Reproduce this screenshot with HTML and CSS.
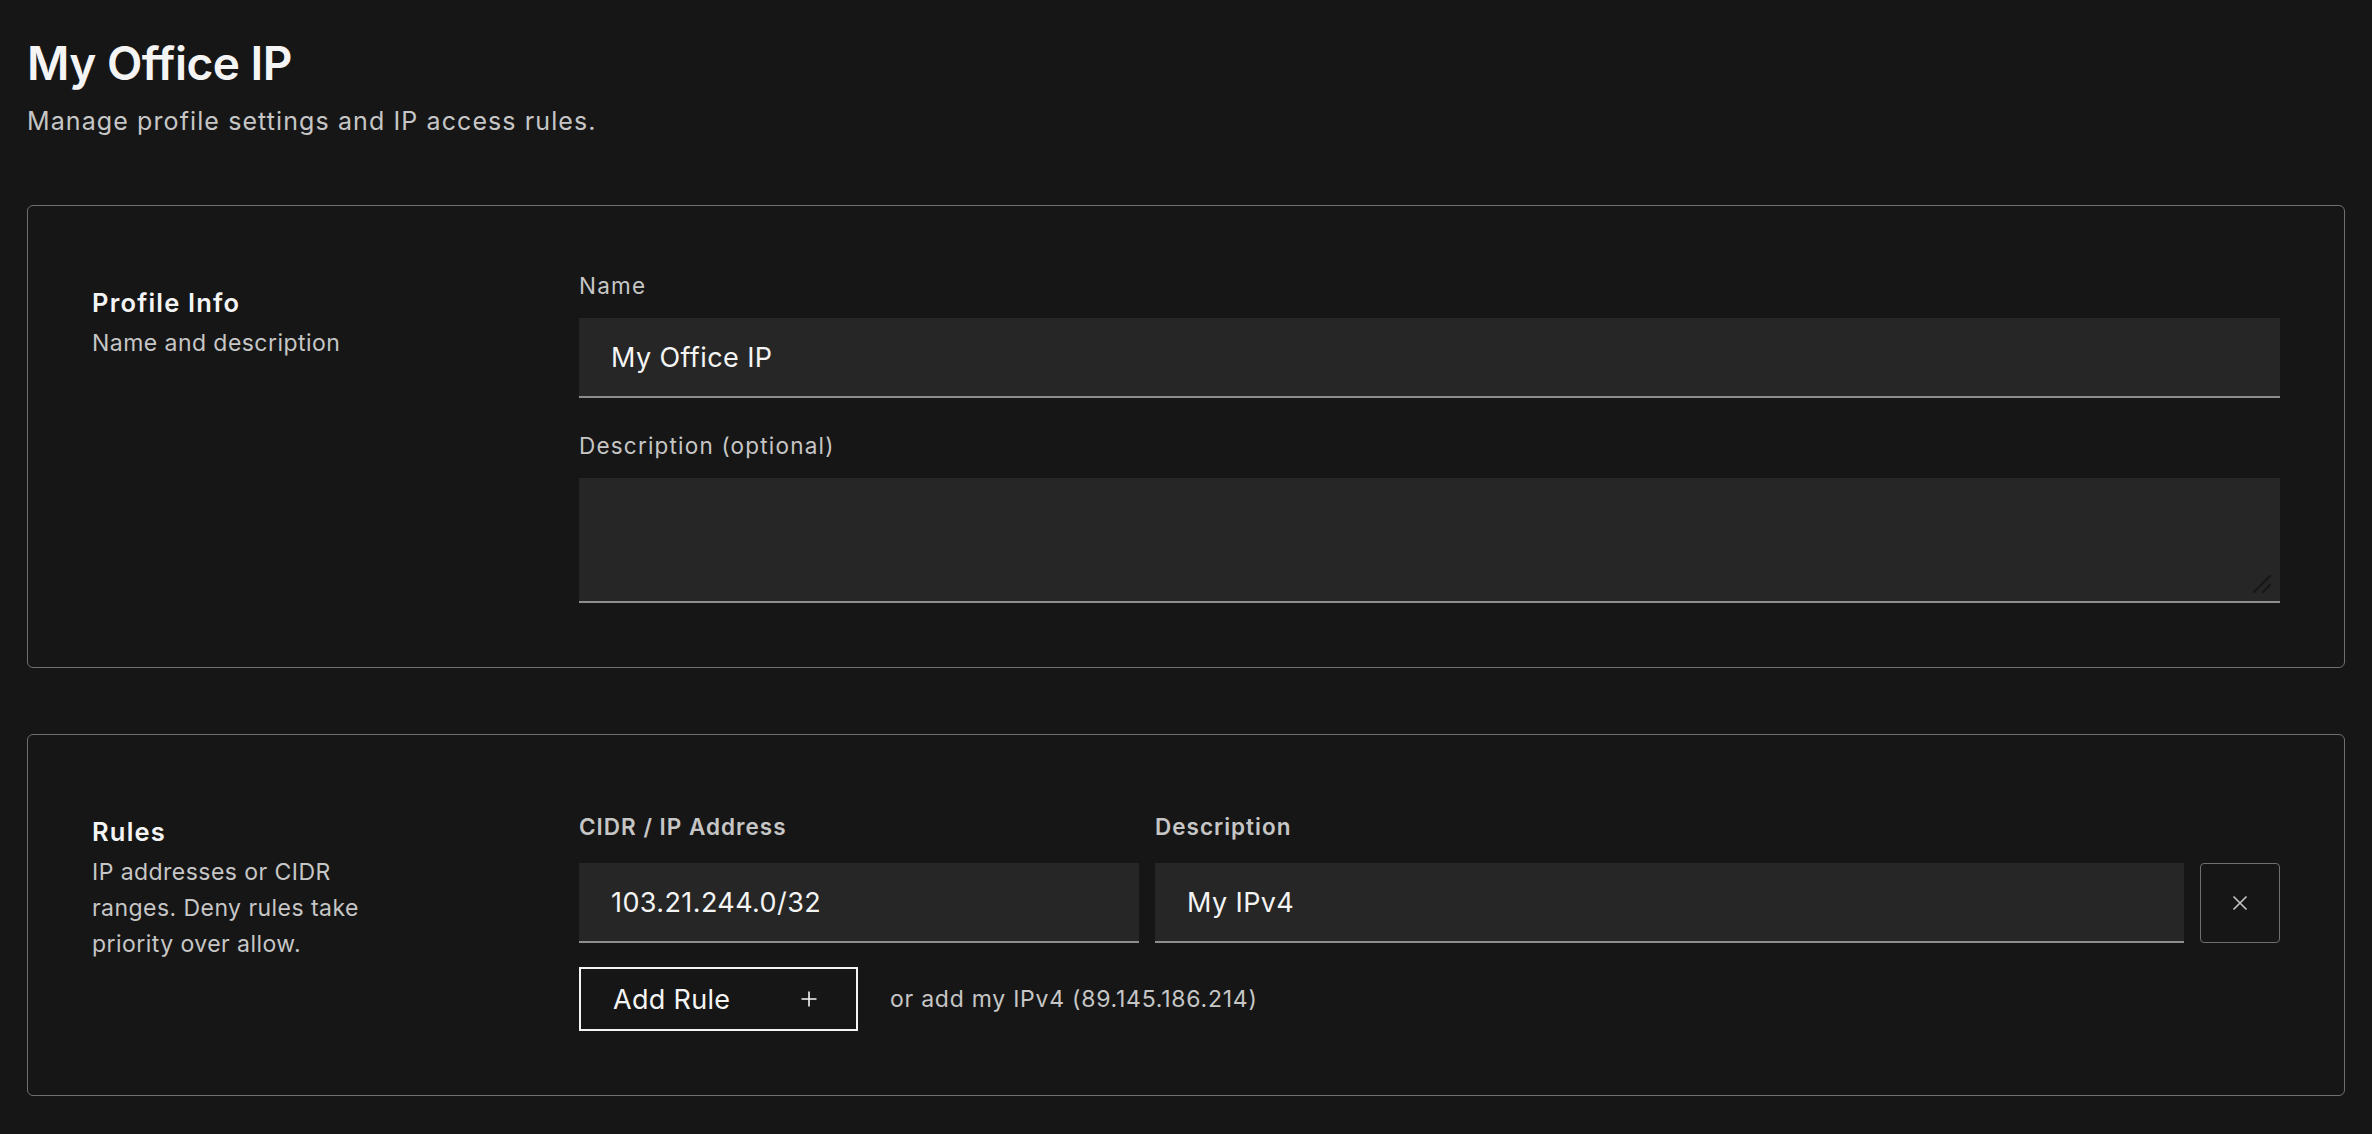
FILE: index.html
```html
<!DOCTYPE html>
<html>
<head>
    <meta charset="utf-8">
    <title>My Office IP</title>
    <link rel="stylesheet" href="styles.css">
</head>

<body>
    <main class="page">
        <header class="page-head">
            <h1 class="page-title">My Office IP</h1>
            <p class="page-sub">Manage profile settings and IP access rules.</p>
        </header>

        <section class="panel">
            <div class="panel-intro">
                <h2 class="panel-title">Profile Info</h2>
                <p class="panel-text">Name and description</p>
            </div>
            <div class="panel-body">
                <div class="field">
                    <label class="field-label" for="name">Name</label>
                    <input class="text-input" id="name" type="text" value="My Office IP">
                </div>
                <div class="field">
                    <label class="field-label" for="desc">Description (optional)</label>
                    <div class="area-wrap">
                        <textarea class="text-input text-area" id="desc"></textarea>
                        <svg class="grip" width="18" height="18" viewBox="0 0 18 18">
                            <path d="M1 17 L17 1 M10 17 L17 10" stroke="#161616" stroke-width="2" stroke-linecap="round" fill="none"/>
                        </svg>
                    </div>
                </div>
            </div>
        </section>

        <section class="panel">
            <div class="panel-intro">
                <h2 class="panel-title">Rules</h2>
                <p class="panel-text">IP addresses or CIDR ranges. Deny rules take priority over allow.</p>
            </div>
            <div class="panel-body rules">
                <div class="rule-grid">
                    <span class="col-head">CIDR / IP Address</span>
                    <span class="col-head">Description</span>
                    <span></span>
                    <input class="text-input" type="text" value="103.21.244.0/32">
                    <input class="text-input" type="text" value="My IPv4">
                    <button class="remove-btn" type="button" aria-label="Remove rule">
                        <svg width="16" height="16" viewBox="0 0 16 16">
                            <path d="M1.5 1.5 L14.5 14.5 M14.5 1.5 L1.5 14.5" stroke="#c6c6c6" stroke-width="1.6" fill="none"/>
                        </svg>
                    </button>
                </div>
                <div class="rule-actions">
                    <button class="add-btn" type="button">
                        <span>Add Rule</span>
                        <svg width="16" height="16" viewBox="0 0 16 16">
                            <path d="M8 0.5 V15.5 M0.5 8 H15.5" stroke="#f4f4f4" stroke-width="1.6" fill="none"/>
                        </svg>
                    </button>
                    <span class="hint">or add my IPv4 (89.145.186.214)</span>
                </div>
            </div>
        </section>
    </main>
</body>

</html>
```

FILE: styles.css
```css
html, body {
    margin: 0;
    background: #161616;
    color: #f4f4f4;
    font-family: "Inter", "Liberation Sans", sans-serif;
}

.page {
    padding: 35px 27px 0;
}

.page-title {
    margin: 0;
    font-size: 46px;
    line-height: 56px;
    font-weight: 600;
    letter-spacing: -0.5px;
    color: #f4f4f4;
}
.page-sub {
    margin: 12px 0 0;
    font-size: 25px;
    line-height: 36px;
    letter-spacing: 1.1px;
    color: #c6c6c6;
}

.panel {
    margin-top: 66px;
    border: 1px solid #6f6f6f;
    border-radius: 6px;
    padding: 64px;
    display: grid;
    grid-template-columns: 487px 1fr;
}
.panel-intro {
    padding-top: 17px;
}
.panel-title {
    margin: 0;
    font-size: 25.5px;
    line-height: 32px;
    font-weight: 600;
    letter-spacing: 1.2px;
    color: #f4f4f4;
}
.panel-text {
    margin: 6px 0 0;
    max-width: 300px;
    font-size: 23px;
    line-height: 36px;
    letter-spacing: 0.45px;
    color: #c6c6c6;
}

.field + .field {
    margin-top: 32px;
}
.field-label {
    display: block;
    margin-bottom: 16px;
    font-size: 22.5px;
    line-height: 32px;
    letter-spacing: 1.2px;
    color: #c6c6c6;
}

.text-input {
    display: block;
    box-sizing: border-box;
    width: 100%;
    height: 80px;
    margin: 0;
    padding: 0 32px;
    background: #262626;
    border: none;
    border-bottom: 2px solid #8d8d8d;
    border-radius: 0;
    outline: none;
    font-family: inherit;
    font-size: 27px;
    letter-spacing: 0.4px;
    color: #f4f4f4;
}
.area-wrap {
    position: relative;
}
.text-area {
    height: 125px;
    resize: none;
}
.grip {
    position: absolute;
    right: 9px;
    bottom: 10px;
}

.rules {
    padding-top: 12px;
}
.rule-grid {
    display: grid;
    grid-template-columns: 560px 1fr 80px;
    column-gap: 16px;
    row-gap: 20px;
}
.col-head {
    font-size: 22.5px;
    line-height: 32px;
    font-weight: 600;
    letter-spacing: 1px;
    color: #c6c6c6;
}
.remove-btn {
    box-sizing: border-box;
    width: 80px;
    height: 80px;
    display: flex;
    align-items: center;
    justify-content: center;
    background: transparent;
    border: 1px solid #6f6f6f;
    border-radius: 4px;
    padding: 0;
}

.rule-actions {
    margin-top: 24px;
    display: flex;
    align-items: center;
    gap: 32px;
}
.add-btn {
    box-sizing: border-box;
    width: 279px;
    height: 64px;
    display: flex;
    align-items: center;
    justify-content: space-between;
    padding: 0 39px 0 32px;
    background: transparent;
    border: 2px solid #f4f4f4;
    border-radius: 0;
    font-family: inherit;
    font-size: 27px;
    letter-spacing: 0.3px;
    color: #f4f4f4;
}
.hint {
    font-size: 23px;
    letter-spacing: 0.75px;
    color: #c6c6c6;
}
```
